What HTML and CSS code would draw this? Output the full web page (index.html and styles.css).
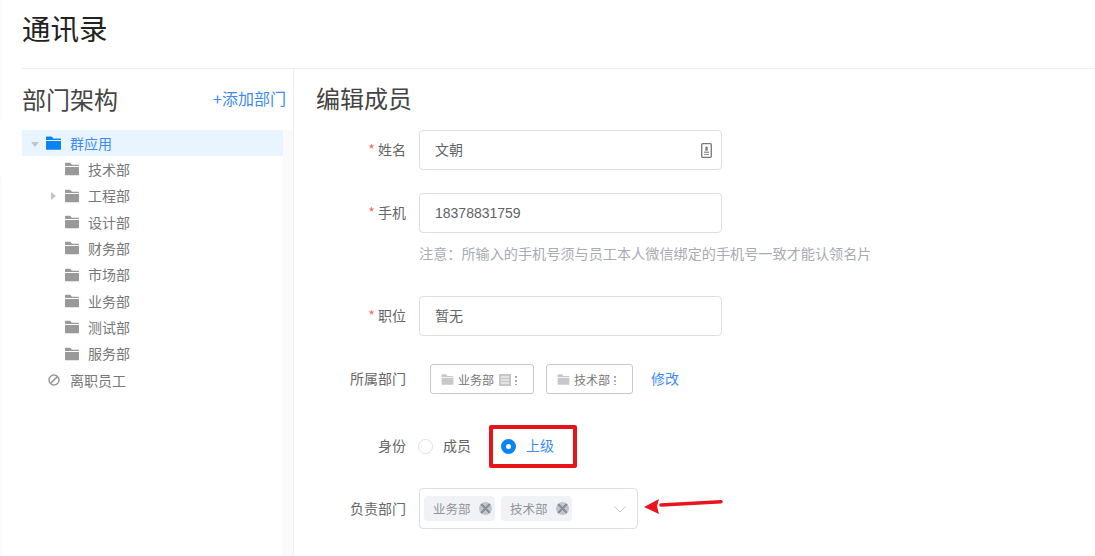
FILE: index.html
```html
<!DOCTYPE html>
<html lang="zh-CN">
<head>
<meta charset="utf-8">
<title>通讯录</title>
<link rel="stylesheet" href="styles.css">
</head>
<body>
<svg class="defs" width="0" height="0"><defs>
<symbol id="folder" viewBox="0 0 15 14"><path d="M0 1.2Q0 .4 .8 .4H5.6L7.4 2.4H14.2Q15 2.4 15 3.2V3.9H0Z M0 4.9H15V13Q15 13.8 14.2 13.8H.8Q0 13.8 0 13Z" fill="currentColor"/></symbol>
</defs></svg>
<div class="page">
  <header class="top"><h1>通讯录</h1></header>
  <main class="main">
    <aside class="side">
      <div class="side-head"><h2>部门架构</h2><a class="add">+添加部门</a></div>
      <ul class="tree">
        <li class="node active"><i class="arrow down"></i><svg class="ico ico-root"><use href="#folder"/></svg><span>群应用</span></li>
        <li class="node sub"><svg class="ico"><use href="#folder"/></svg><span>技术部</span></li>
        <li class="node sub"><i class="arrow right"></i><svg class="ico"><use href="#folder"/></svg><span>工程部</span></li>
        <li class="node sub"><svg class="ico"><use href="#folder"/></svg><span>设计部</span></li>
        <li class="node sub"><svg class="ico"><use href="#folder"/></svg><span>财务部</span></li>
        <li class="node sub"><svg class="ico"><use href="#folder"/></svg><span>市场部</span></li>
        <li class="node sub"><svg class="ico"><use href="#folder"/></svg><span>业务部</span></li>
        <li class="node sub"><svg class="ico"><use href="#folder"/></svg><span>测试部</span></li>
        <li class="node sub"><svg class="ico"><use href="#folder"/></svg><span>服务部</span></li>
        <li class="node off"><svg class="ban" viewBox="0 0 12 12"><circle cx="6" cy="6" r="5" fill="none" stroke="currentColor" stroke-width="1.5"/><path d="M2.6 9.4 9.4 2.6" stroke="currentColor" stroke-width="1.5"/></svg><span>离职员工</span></li>
      </ul>
    </aside>
    <section class="content">
      <h2 class="content-title">编辑成员</h2>
      <form class="form">
        <div class="row row-name">
          <label class="label"><b>*</b> 姓名</label>
          <div class="input"><span>文朝</span><svg class="card" viewBox="0 0 11 15"><rect x=".7" y=".7" width="9.6" height="13.6" rx="1" fill="none" stroke="#777" stroke-width="1.300"/><path d="M5.500 3.500a1.200 1.200 0 0 1 1 2L7 7.500H4L4.500 5.500a1.200 1.200 0 0 1 1-2Z" fill="#777"/><path d="M3 8.500H8V10H3ZM3 11H8V12H3Z" fill="#999"/></svg></div>
        </div>
        <div class="row row-phone">
          <label class="label"><b>*</b> 手机</label>
          <div class="input"><span class="num">18378831759</span></div>
        </div>
        <p class="hint">注意：所输入的手机号须与员工本人微信绑定的手机号一致才能认领名片</p>
        <div class="row row-job">
          <label class="label"><b>*</b> 职位</label>
          <div class="input"><span>暂无</span></div>
        </div>
        <div class="row row-dept">
          <label class="label">所属部门</label>
          <div class="dept"><svg class="dept-ico"><use href="#folder"/></svg><span>业务部</span><svg class="org" viewBox="0 0 12 12"><rect width="12" height="12" fill="#c8c8c8"/><path d="M2 3H10M2 6H10M2 9H10" stroke="#fff"/></svg><i class="dots"></i></div>
          <div class="dept dept-2"><svg class="dept-ico"><use href="#folder"/></svg><span>技术部</span><i class="dots"></i></div>
          <a class="edit">修改</a>
        </div>
        <div class="row row-role">
          <label class="label">身份</label>
          <div class="radio"><i class="dot"></i><span>成员</span></div>
          <div class="radio-box"><i class="dot on"></i><span>上级</span></div>
        </div>
        <div class="row row-lead">
          <label class="label">负责部门</label>
          <div class="select">
            <span class="tag">业务部<i class="x"></i></span>
            <span class="tag">技术部<i class="x"></i></span>
            <svg class="chev" viewBox="0 0 12 7"><path d="M.5 .5 6 6 11.500 .5" fill="none" stroke="#c0c4cc"/></svg>
          </div>
          <svg class="pointer" viewBox="0 0 82 24"><path d="M78 7.700 18 11" stroke="#e8141c" stroke-width="3.500" stroke-linecap="round"/><path d="M1 13 16 5 14 12 16 20Z" fill="#e8141c"/></svg>
        </div>
      </form>
    </section>
  </main>
</div>
</body>
</html>
```
FILE: styles.css
```css
* { box-sizing: border-box; }
html, body { margin: 0; height: 100%; overflow: hidden; background: #fff; }
body { font-family: "Noto Sans CJK SC", "Liberation Sans", sans-serif; color: #606266; font-size: 14px; }
.defs { position: absolute; }
h1, h2, p, ul { margin: 0; padding: 0; font-weight: 400; }
.page { padding-left: 22px; height: 100%; background: linear-gradient(#fafafa, #fafafa) 0 0/2px 120px no-repeat, linear-gradient(#fafafa, #fafafa) 0 177px/2px 100% no-repeat; }
.top { height: 69px; border-bottom: 1px solid #eeeeee; }
.top h1 { font-size: 28.500px; line-height: 55px; color: #222; }
.main { display: flex; height: 487px; }
.side { width: 272px; border-right: 1px solid #eeeeee; background: linear-gradient(#fff, #fff) top/100% 61px no-repeat, linear-gradient(#fff, #fff) left/261px 100% no-repeat, #fafafa; }
.side-head { height: 61px; display: flex; justify-content: space-between; align-items: center; padding-right: 7px; }
.side-head h2 { font-size: 24px; color: #444; line-height: 59px; padding-bottom: 3px; }
.add { font-size: 16px; color: #3d8bf2; padding-bottom: 3px; }
.tree { list-style: none; width: 261px; }
.node { height: 26.33px; display: flex; align-items: center; position: relative; font-size: 14px; color: #777; }
.node span { padding-bottom: 1px; margin-left: -1px; }
.node.active { background: #e8f4fe; color: #3d8bf2; padding-left: 24px; }
.node.active span { margin-left: 0; }
.node.sub { padding-left: 43px; }
.node.off { padding-left: 26px; }
.ico { width: 14px; height: 14px; color: #999; margin-right: 10px; flex: none; }
.ico-root { width: 15px; color: #0a84f2; margin-right: 9px; }
.arrow { position: absolute; width: 0; height: 0; border-style: solid; }
.arrow.down { left: 9px; top: 12px; border-width: 5px 4.500px 0; border-color: #c0c4cc transparent transparent; }
.arrow.right { left: 29px; top: 9px; border-width: 4.500px 0 4.500px 5px; border-color: transparent transparent transparent #c0c4cc; }
.ban { width: 12px; height: 12px; color: #999; margin-right: 11px; }
.content { flex: 1; padding-left: 23px; }
.content-title { font-size: 24px; line-height: 58px; color: #444; height: 61px; margin-left: -1px; }
.row { display: flex; align-items: center; }
.label { width: 89px; text-align: right; margin-right: 13px; color: #666; flex: none; padding-bottom: 2px; }
.label b { color: #f56c6c; font-weight: 400; }
.input { width: 303px; height: 40px; border: 1px solid #dcdfe6; border-radius: 4px; display: flex; align-items: center; justify-content: space-between; padding: 0 9px 0 15px; color: #606266; }
.input span { padding-bottom: 2px; }
.input .num { font-family: "Liberation Sans", sans-serif; padding-bottom: 0; }
.card { width: 11px; height: 15px; }
.row-phone { margin-top: 23px; }
.hint { margin: 10px 0 0 102px; font-size: 14.150px; line-height: 20px; color: #a8abb2; }
.row-job { margin-top: 33px; }
.row-dept { margin-top: 28px; height: 30px; }
.dept { width: 104px; height: 30px; border: 1px solid #c8c8c8; border-radius: 3px; margin-left: 11px; display: flex; align-items: center; padding: 1px 0 0 10px; font-size: 12px; color: #777; }
.dept-2 { width: 87px; margin-left: 12px; }
.dept-ico { width: 13px; height: 11px; color: #c8c8c8; margin-right: 4px; }
.org { width: 12px; height: 12px; margin-left: 5px; }
.dots { width: 2px; height: 10px; margin-left: 4px; background: radial-gradient(circle, #aaa 1px, transparent 1px) 0 0/2px 4px; }
.edit { margin-left: 18px; color: #3d8bf2; padding-bottom: 2px; }
.row-role { margin-top: 31px; height: 42px; }
.row-role .label { margin-right: 12px; }
.radio { display: flex; align-items: center; color: #606266; width: 71px; }
.radio span { padding-bottom: 2px; margin-left: -1px; }
.dot { width: 15px; height: 15px; border-radius: 50%; border: 1px solid #dcdfe6; background: #fff; margin-right: 11px; flex: none; }
.dot.on { border: 5px solid #0a84f2; width: 15px; height: 15px; margin-right: 10px; }
.radio-box { width: 88px; height: 43px; border: 4px solid #e8141c; border-radius: 2px; display: flex; align-items: center; padding-left: 8px; color: #3d8bf2; }
.radio-box span { padding-bottom: 2px; }
.row-lead { margin-top: 21px; position: relative; }
.select { width: 219px; height: 41px; border: 1px solid #dcdfe6; border-radius: 4px; display: flex; align-items: center; padding-left: 4px; gap: 6px; position: relative; }
.tag { height: 25px; width: 71px; background: #f0f2f5; border-radius: 4px; display: flex; align-items: center; padding: 0 0 1px 9px; font-size: 12.500px; color: #909399; position: relative; }
.x { position: absolute; right: 3px; top: 6px; width: 13px; height: 13px; border-radius: 50%; background: #bfc3cc linear-gradient(45deg, transparent 46%, #8a8f99 46%, #8a8f99 54%, transparent 54%); }
.x::after { content: ""; position: absolute; inset: 0; border-radius: 50%; background: linear-gradient(-45deg, transparent 46%, #8a8f99 46%, #8a8f99 54%, transparent 54%); }
.chev { position: absolute; right: 11px; top: 17px; width: 12px; height: 7px; }
.pointer { position: absolute; left: 326px; top: 6px; width: 82px; height: 24px; }
```
